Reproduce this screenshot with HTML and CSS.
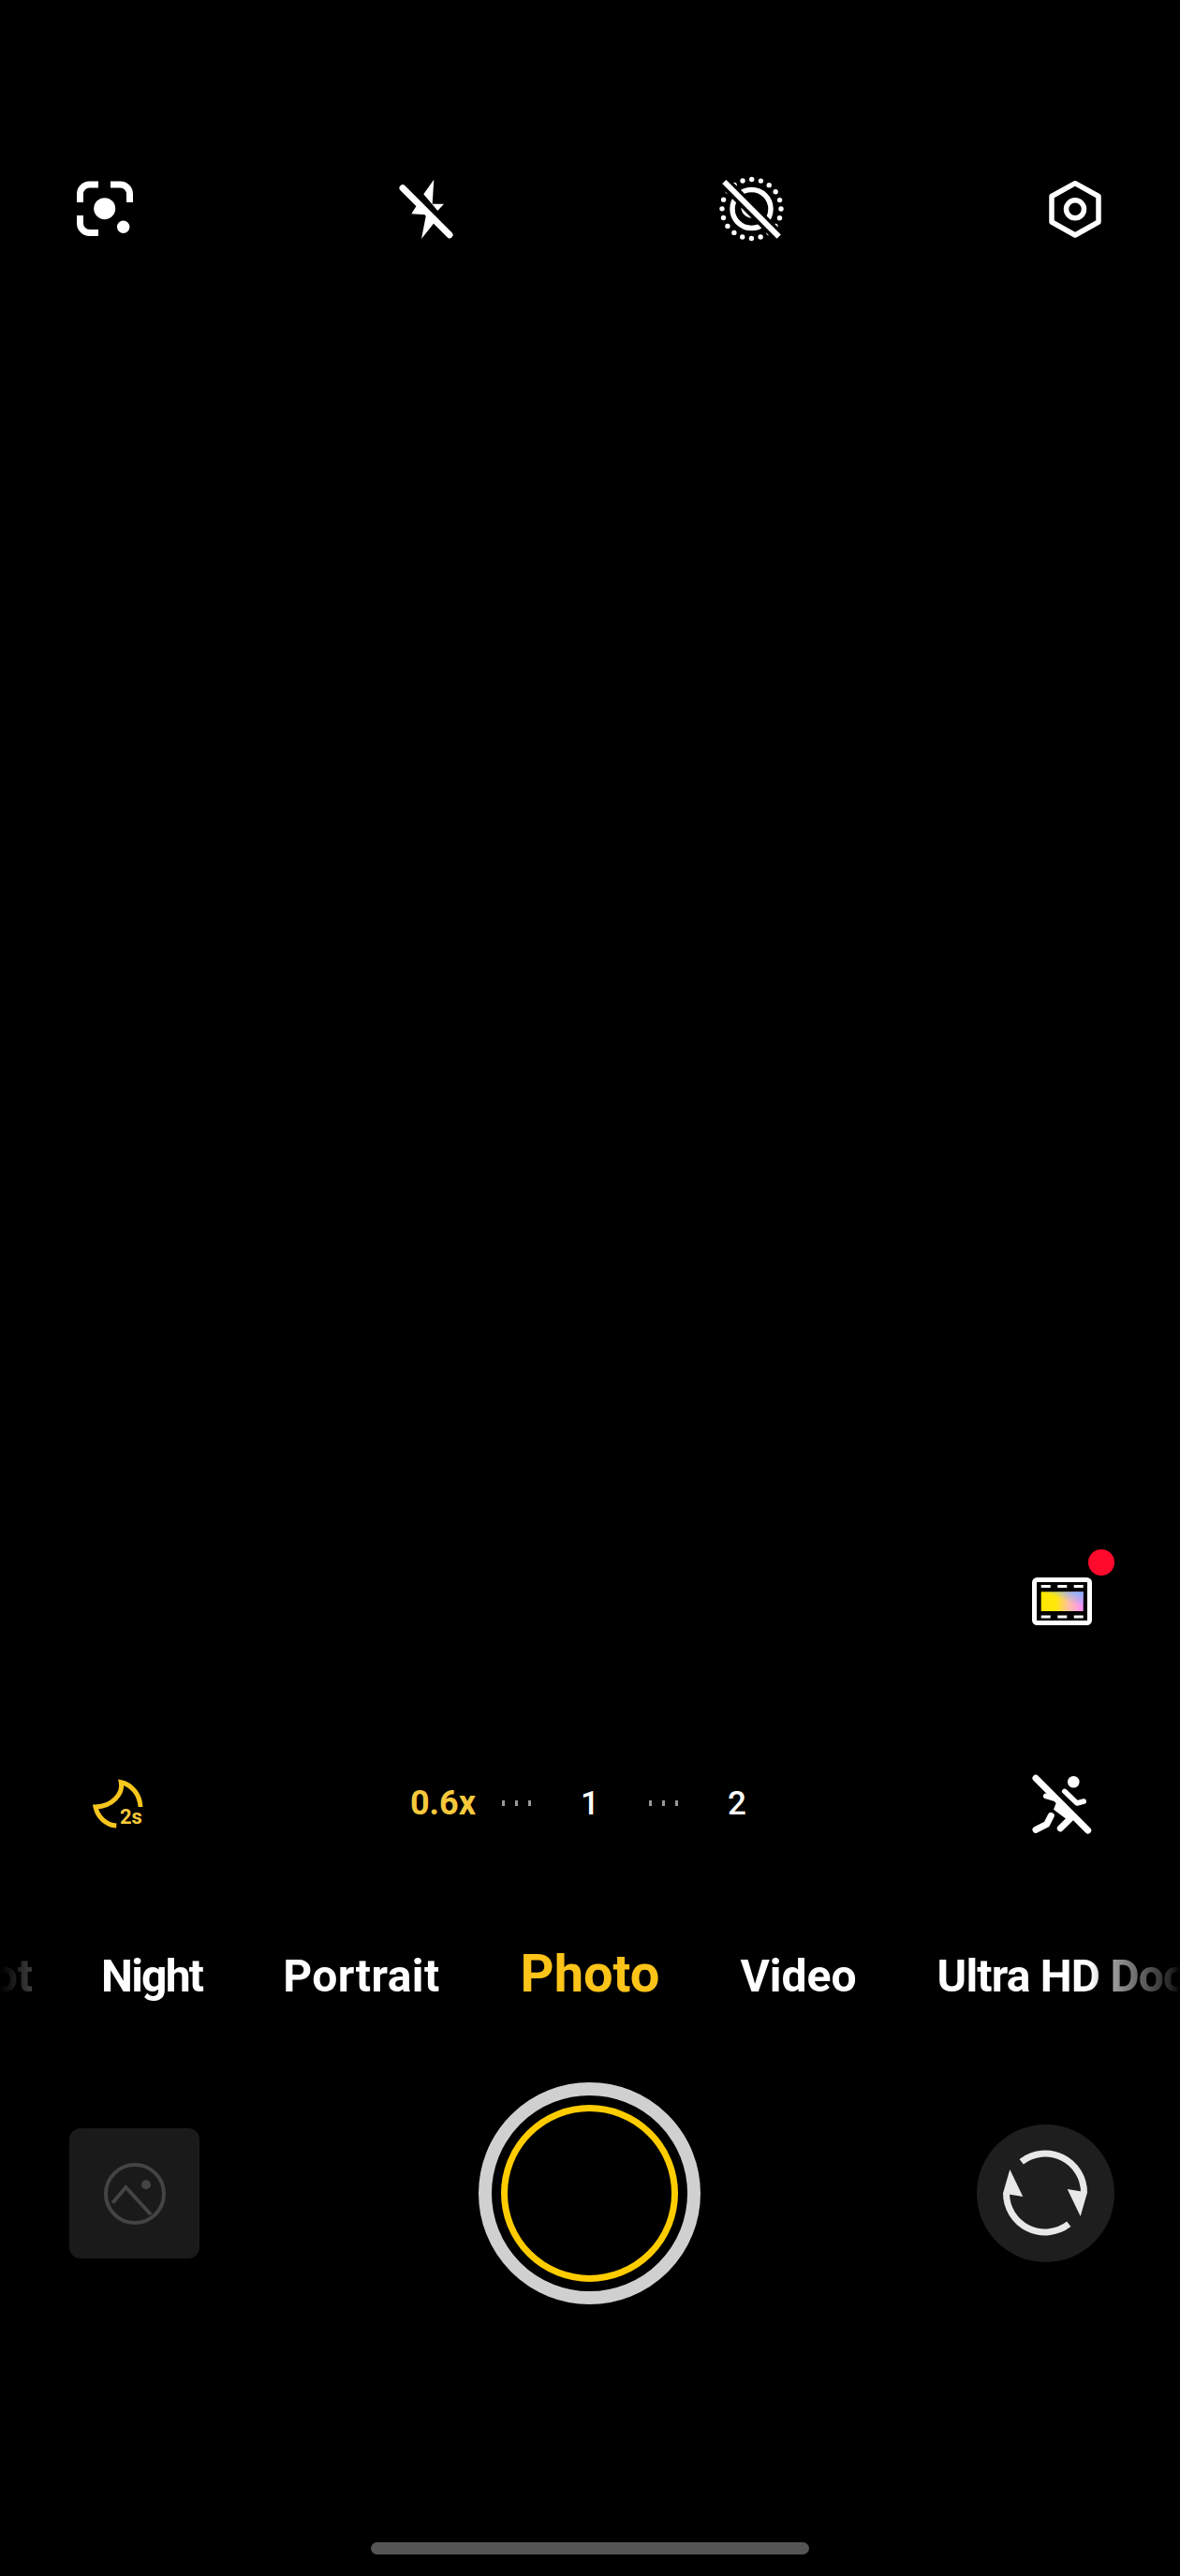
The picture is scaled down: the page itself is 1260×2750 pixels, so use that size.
FILE: index.html
```html
<!DOCTYPE html>
<html lang="en">
<head>
    <meta charset="UTF-8">
    <meta name="viewport" content="width=device-width, initial-scale=1.0">
    <title>Camera</title>
    <link rel="stylesheet" href="styles.css">
</head>

<body>
    <div id="camera">
        <!-- top icons -->
        <div class="top-bar">
            <svg class="icon" viewBox="0 0 72 72">
                <g class="line-white" stroke-width="7">
                    <path d="M9.5 30V21a10 10 0 0 1 10-10H29"/>
                    <path d="M42 11H52.500a10 10 0 0 1 10 10V30"/>
                    <path d="M9.500 44V52.500a10 10 0 0 0 10 10H29"/>
                </g>
                <circle class="fill-white" cx="35.700" cy="36.700" r="11.500"/>
                <circle class="fill-white" cx="55.700" cy="56.300" r="6.700"/>
            </svg>
            <svg class="icon" viewBox="0 0 72 72">
                <polygon class="fill-white" points="42.300,5.700 31.300,21.300 46.300,39 53,31.700 40.700,31.700"/>
                <polygon class="fill-white" points="24,33.300 18.300,42.300 34,43.300 29,69 42.300,52.300"/>
                <path class="line-white" stroke-width="7" stroke-linecap="round" d="M9 14.700L59 64.700"/>
            </svg>
            <svg class="icon" viewBox="0 0 72 72">
                <circle class="line-white" cx="35.500" cy="37" r="31.500" stroke-width="5.400" stroke-linecap="round" stroke-dasharray="0 9.896"/>
                <circle class="line-white" cx="35.500" cy="37" r="20.500" stroke-width="5.500"/>
                <path class="line-white" stroke-width="4" d="M26.300 35.700a9.500 9.500 0 0 0 12.700 8.300"/>
                <path class="line-black" stroke-width="13" d="M4 6L67 69"/>
                <path class="line-white" stroke-width="6" d="M6.300 8L64.700 66.700"/>
            </svg>
            <svg class="icon" viewBox="0 0 72 72">
                <polygon class="line-white" stroke-width="5.500" stroke-linejoin="round" points="36,9.700 61,23.500 61,51 36,65 11,51 11,23.500"/>
                <circle class="line-white" cx="36" cy="37.300" r="9.500" stroke-width="5.500"/>
            </svg>
        </div>

        <!-- viewfinder, empty because the preview is black -->
        <div class="viewfinder">
            <div class="film-btn">
                <svg class="film-icon" viewBox="0 0 64 51">
                    <defs>
                        <linearGradient id="filmBase">
                            <stop offset="0" stop-color="#ffe600"/>
                            <stop offset="0.35" stop-color="#ffe80a"/>
                            <stop offset="0.65" stop-color="#ffc0a0"/>
                            <stop offset="1" stop-color="#ff8cff"/>
                        </linearGradient>
                        <linearGradient id="filmBlue" x1="0.4" y1="0.7" x2="1" y2="0">
                            <stop offset="0.3" stop-color="#78b4ff" stop-opacity="0"/>
                            <stop offset="1" stop-color="#78b4ff"/>
                        </linearGradient>
                    </defs>
                    <rect class="line-white" x="2.500" y="2.500" width="59" height="46" rx="3" stroke-width="5"/>
                    <g class="fill-white">
                        <rect x="9.700" y="8" width="10" height="3"/>
                        <rect x="27.300" y="8" width="10" height="3"/>
                        <rect x="44.700" y="8" width="10" height="3"/>
                        <rect x="9.700" y="40.500" width="10" height="3"/>
                        <rect x="27.300" y="40.500" width="10" height="3"/>
                        <rect x="44.700" y="40.500" width="10" height="3"/>
                    </g>
                    <rect x="9.700" y="15.300" width="45" height="20.700" fill="url(#filmBase)"/>
                    <rect x="9.700" y="15.300" width="45" height="20.700" fill="url(#filmBlue)"/>
                </svg>
                <span class="red-dot"></span>
            </div>
        </div>

        <!-- zoom row -->
        <div class="zoom-row">
            <svg class="icon" viewBox="0 0 72 72">
                <path class="line-yellow" stroke-width="5" d="M61 40C60.300 26 51 16 40.300 13.700C42.700 26 31 39.300 13 40C15.300 51 24.300 59.300 35.300 60"/>
                <text class="moon-text" x="39" y="57.500">2s</text>
            </svg>
            <div class="zoom-stops">
                <span class="stop stop-on">0.6x</span>
                <span class="stop"><span class="ticks"><i></i><i></i><i></i></span></span>
                <span class="stop">1</span>
                <span class="stop"><span class="ticks"><i></i><i></i><i></i></span></span>
                <span class="stop">2</span>
            </div>
            <svg class="icon icon-end" viewBox="0 0 72 72">
                <circle class="fill-white" cx="48.300" cy="13.300" r="6.300"/>
                <path class="line-white" stroke-width="5.500" stroke-linejoin="round" stroke-linecap="round" d="M38.700 23.300L52 36L59.300 34"/>
                <path class="line-white" stroke-width="5.500" stroke-linecap="round" d="M18.700 28.300L27 31"/>
                <polygon class="fill-white" points="30.300,34.300 50.300,53.700 40.300,52.700 27,42.700"/>
                <path class="line-white" stroke-width="7" stroke-linecap="round" d="M34.300 62.700L45.300 52"/>
                <path class="line-white" stroke-width="7" stroke-linecap="round" stroke-linejoin="round" d="M8 64.300L19.700 58.300L24.300 49.300"/>
                <path class="line-white" stroke-width="7" stroke-linecap="round" d="M8 9.300L63.700 65"/>
            </svg>
        </div>

        <!-- mode strip -->
        <div class="modes">
            <div class="modes-side modes-left">
                <span class="mode-snap">Snapshot</span>
                <span class="mode-night">Night</span>
                <span class="mode-portrait">Portrait</span>
            </div>
            <span class="mode-on">Photo</span>
            <div class="modes-side">
                <span>Video</span>
                <span class="mode-doc">Ultra HD Document</span>
            </div>
        </div>

        <!-- shutter row -->
        <div class="controls">
            <div class="gallery">
                <svg class="icon" viewBox="0 0 72 72">
                    <circle class="line-gray" cx="36" cy="36" r="31" stroke-width="4"/>
                    <path class="line-gray" stroke-width="4" d="M12.300 45.700L26.300 29L53 58"/>
                    <circle class="fill-gray" cx="48" cy="26.300" r="5"/>
                </svg>
            </div>
            <div class="shutter"><div class="shutter-inner"></div></div>
            <div class="flip">
                <svg class="flip-icon" viewBox="0 0 147 147">
                    <g>
                        <path class="line-light" stroke-width="7" d="M98.300 106.300A41.500 41.500 0 0 1 31.500 73"/>
                        <polygon class="fill-light" points="35.300,48 49.300,77 28,73.500"/>
                    </g>
                    <g transform="rotate(180 73 73)">
                        <path class="line-light" stroke-width="7" d="M98.300 106.300A41.500 41.500 0 0 1 31.500 73"/>
                        <polygon class="fill-light" points="35.300,48 49.300,77 28,73.500"/>
                    </g>
                </svg>
            </div>
        </div>

        <div class="home-bar"></div>
    </div>
</body>

</html>
```

FILE: styles.css
```css
html,body{
  margin: 0;
  background-color: #000;
}
#camera{
  display: flex;
  flex-direction: column;
  width: 1260px;
  height: 2750px;
  overflow: hidden;
  background-color: #000;
  font-family: Roboto, "Liberation Sans", sans-serif;
  color: #fff;
}

/* shared svg bits */
.icon{
  display: block;
  width: 72px;
  height: 72px;
}
.line-white{
  fill: none;
  stroke: #fff;
}
.line-black{
  fill: none;
  stroke: #000;
}
.line-yellow{
  fill: none;
  stroke: #f6c51e;
}
.line-gray{
  fill: none;
  stroke: #444;
}
.line-light{
  fill: none;
  stroke: #e8e8e8;
}
.fill-white{
  fill: #fff;
}
.fill-gray{
  fill: #444;
}
.fill-light{
  fill: #e8e8e8;
}

.top-bar{
  display: flex;
  justify-content: space-between;
  padding: 186px 76px 0;
}

.viewfinder{
  flex: 1;
  display: flex;
  justify-content: flex-end;
  align-items: flex-end;
  padding: 0 94px 154px 0;
}
.film-btn{
  position: relative;
  width: 64px;
  height: 51px;
}
.film-icon{
  display: block;
  width: 64px;
  height: 51px;
}
.red-dot{
  position: absolute;
  top: -30px;
  left: 60px;
  width: 28px;
  height: 28px;
  border-radius: 50%;
  background-color: #ff0a2c;
}

.zoom-row{
  display: grid;
  grid-template-columns: 1fr auto 1fr;
  align-items: center;
  height: 72px;
  padding: 0 90px 0 89px;
}
.icon-end{
  justify-self: end;
}
.moon-text{
  font-size: 22px;
  font-weight: 700;
  fill: #f6c93c;
}
.zoom-stops{
  display: grid;
  grid-template-columns: repeat(5, 78.5px);
  align-items: center;
  margin-left: 1px;
  font-size: 35px;
  font-weight: 500;
  text-align: center;
}
.stop-on{
  color: #f6c93c;
  font-size: 36px;
  font-weight: 700;
}
.ticks{
  display: flex;
  justify-content: center;
  gap: 11px;
}
.ticks i{
  width: 3px;
  height: 6px;
  background-color: #999;
}

.modes{
  display: grid;
  grid-template-columns: 1fr auto 1fr;
  align-items: baseline;
  height: 80px;
  margin-top: 106px;
  font-size: 48px;
  font-weight: 700;
  line-height: 80px;
  white-space: nowrap;
  -webkit-mask-image: linear-gradient(to right, transparent 0, rgba(0,0,0,.25) 35px, #000 100px, #000 1165px, rgba(0,0,0,.6) 1190px, rgba(0,0,0,.15) 1250px, transparent 1260px);
  mask-image: linear-gradient(to right, transparent 0, rgba(0,0,0,.25) 35px, #000 100px, #000 1165px, rgba(0,0,0,.6) 1190px, rgba(0,0,0,.15) 1250px, transparent 1260px);
}
.modes-side{
  display: flex;
  gap: 86px;
  min-width: 0;
  padding: 0 86px;
  overflow: hidden;
}
.modes-side span{
  flex-shrink: 0;
}
.modes-left{
  justify-content: flex-end;
}
.mode-snap{
  margin-right: -13px;
}
.mode-night{
  letter-spacing: -1.800px;
}
.mode-portrait{
  letter-spacing: 0.400px;
}
.mode-doc{
  letter-spacing: -0.800px;
}
.mode-on{
  color: #fcc419;
  font-size: 56px;
}

.controls{
  display: grid;
  grid-template-columns: 1fr auto 1fr;
  align-items: center;
  margin-top: 76px;
  padding: 0 71px 0 70px;
}
.gallery{
  display: flex;
  justify-content: center;
  align-items: center;
  width: 139px;
  height: 139px;
  margin-left: 4px;
  border-radius: 12px;
  background-color: #1a1a1a;
}
.shutter{
  display: flex;
  justify-content: center;
  align-items: center;
  box-sizing: border-box;
  width: 237px;
  height: 237px;
  border: 14px solid #d0d0d0;
  border-radius: 50%;
}
.shutter-inner{
  box-sizing: border-box;
  width: 189px;
  height: 189px;
  border: 7.5px solid #fc0;
  border-radius: 50%;
}
.flip{
  justify-self: end;
  width: 147px;
  height: 147px;
  margin-right: -1px;
  border-radius: 50%;
  background-color: #1e1e1e;
}
.flip-icon{
  display: block;
  width: 147px;
  height: 147px;
}

.home-bar{
  align-self: center;
  width: 468px;
  height: 13px;
  margin: 254px 0 23px;
  border-radius: 7px;
  background-color: #555;
}
```
